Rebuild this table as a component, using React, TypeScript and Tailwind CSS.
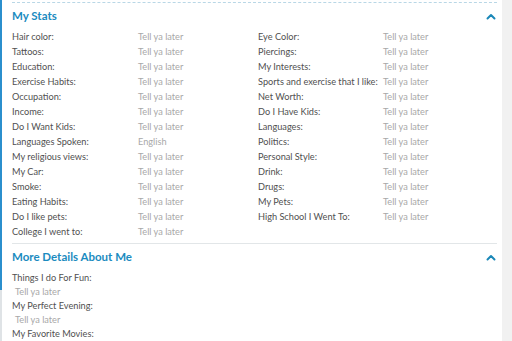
import React from 'react';

const stats: [string, string][] = [
  ['Hair color:', 'Tell ya later'],
  ['Eye Color:', 'Tell ya later'],
  ['Tattoos:', 'Tell ya later'],
  ['Piercings:', 'Tell ya later'],
  ['Education:', 'Tell ya later'],
  ['My Interests:', 'Tell ya later'],
  ['Exercise Habits:', 'Tell ya later'],
  ['Sports and exercise that I like:', 'Tell ya later'],
  ['Occupation:', 'Tell ya later'],
  ['Net Worth:', 'Tell ya later'],
  ['Income:', 'Tell ya later'],
  ['Do I Have Kids:', 'Tell ya later'],
  ['Do I Want Kids:', 'Tell ya later'],
  ['Languages:', 'Tell ya later'],
  ['Languages Spoken:', 'English'],
  ['Politics:', 'Tell ya later'],
  ['My religious views:', 'Tell ya later'],
  ['Personal Style:', 'Tell ya later'],
  ['My Car:', 'Tell ya later'],
  ['Drink:', 'Tell ya later'],
  ['Smoke:', 'Tell ya later'],
  ['Drugs:', 'Tell ya later'],
  ['Eating Habits:', 'Tell ya later'],
  ['My Pets:', 'Tell ya later'],
  ['Do I like pets:', 'Tell ya later'],
  ['High School I Went To:', 'Tell ya later'],
  ['College I went to:', 'Tell ya later'],
];

const details = ['Things I do For Fun:', 'My Perfect Evening:', 'My Favorite Movies:'];

function ChevronUp() {
  return (
    <svg width="10" height="7" viewBox="0 0 10 7" className="mr-[1px]">
      <polyline points="1.5,5.5 5,2 8.5,5.5" fill="none" stroke="#1b88b8" strokeWidth="2" strokeLinecap="round" strokeLinejoin="round" />
    </svg>
  );
}

function SectionHeader({ title }: { title: string }) {
  return (
    <div className="flex items-center justify-between">
      <h2 className="text-[11.5px] font-bold text-[#1b8bc0]">{title}</h2>
      <ChevronUp />
    </div>
  );
}

export default function App() {
  return (
    <div
      className="flex w-[512px] h-[341px] overflow-hidden bg-white"
      style={{ fontFamily: 'Lato, "Open Sans", sans-serif' }}
    >
      {/* left accent rail */}
      <div className="flex flex-col w-[2px] shrink-0">
        <div className="h-[290px] bg-[#2b8fcd]" />
        <div className="flex-1 bg-[#dfe3e6]" />
      </div>

      <div className="flex-1 pl-[10px] pr-[5px] pt-[2px]">
        <div className="border-t border-dashed border-[#b9d7e6]" />

        <div className="h-[26px] flex flex-col justify-center">
          <SectionHeader title="My Stats" />
        </div>

        <div className="grid grid-cols-[126px_120px_125px_1fr] text-[9.2px] leading-[15px]">
          {stats.map(([label, value]) => (
            <React.Fragment key={label}>
              <span className="text-[#505050] whitespace-nowrap">{label}</span>
              <span className="text-[#a8a8a8] whitespace-nowrap">{value}</span>
            </React.Fragment>
          ))}
        </div>

        <div className="mt-[4px] border-t border-[#e2e6e8]" />

        <div className="h-[26px] flex flex-col justify-center">
          <SectionHeader title="More Details About Me" />
        </div>

        <div className="text-[9.2px] leading-[14px] pt-[1px]">
          {details.map((label) => (
            <div key={label}>
              <div className="text-[#505050]">{label}</div>
              <div className="pl-[3px] text-[#a8a8a8]">Tell ya later</div>
            </div>
          ))}
        </div>
      </div>

      {/* scrollbar track */}
      <div className="w-[10px] shrink-0 bg-[#f1f1f1]" />
    </div>
  );
}
